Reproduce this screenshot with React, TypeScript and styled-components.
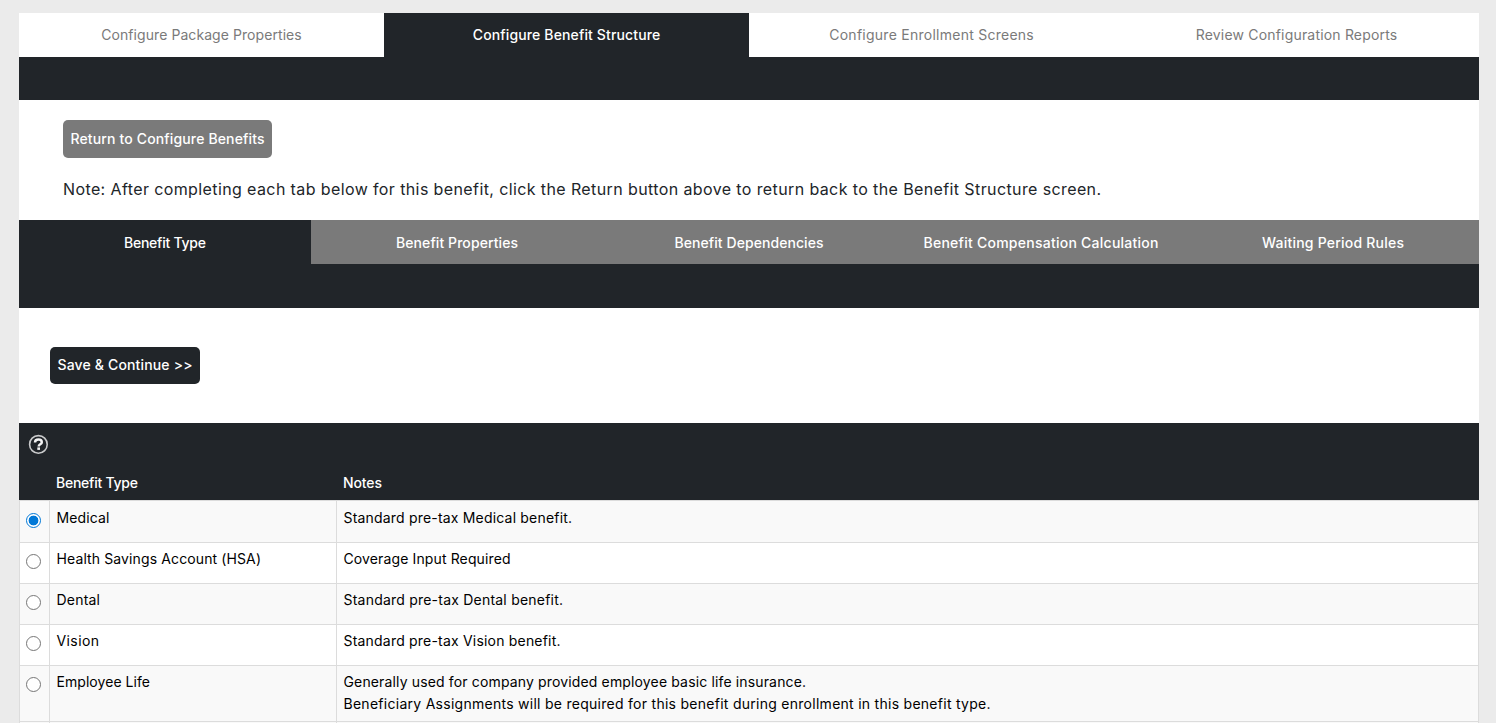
import React, { useState } from "react";
import styled, { createGlobalStyle } from "styled-components";

const ink = "#212529";
const gray = "#7a7a7a";
const rule = "#dcdcdc";

const GlobalStyle = createGlobalStyle`
  *, *::before, *::after { box-sizing: border-box; }
  html { background: #ebebeb; }
  body {
    margin: 0;
    height: 723px;
    overflow: hidden;
    font-family: Inter, "Liberation Sans", sans-serif;
    font-size: 14px;
    color: #000;
  }
`;

const Page = styled.main`
  margin: 13px 17px 0 19px;
  background: #fff;
`;

const Label = styled.span<{ $track: number }>`
  letter-spacing: ${(p) => p.$track}px;
  margin-right: ${(p) => -p.$track}px;
  white-space: nowrap;
`;

const TabBar = styled.nav`
  display: flex;
  height: 44px;
`;

const Tab = styled.button<{ $active: boolean; $filled?: boolean }>`
  flex: 1 1 0;
  display: flex;
  align-items: center;
  justify-content: center;
  padding: ${(p) => (p.$filled ? 2 : 0)}px 0 0;
  border: 0;
  font: inherit;
  line-height: 22px;
  font-weight: ${(p) => (p.$active || p.$filled ? 500 : 400)};
  color: ${(p) => (p.$active || p.$filled ? "#fff" : gray)};
  background: ${(p) => (p.$active ? ink : p.$filled ? gray : "#fff")};
`;

const Strip = styled.div<{ $height: number }>`
  height: ${(p) => p.$height}px;
  background: ${ink};
`;

const Intro = styled.section`
  height: 120px;
  padding: 20px 44px 0;
`;

const Button = styled.button<{ $tone: string; $width: number; $height: number }>`
  display: flex;
  align-items: flex-start;
  justify-content: center;
  width: ${(p) => p.$width}px;
  height: ${(p) => p.$height}px;
  padding: ${(p) => Math.floor((p.$height - 22) / 2)}px 0 0;
  border: 0;
  border-radius: 5px;
  font: inherit;
  line-height: 22px;
  font-weight: 500;
  color: #fff;
  background: ${(p) => p.$tone};
`;

const Note = styled.p`
  margin: 19px 0 0;
  font-size: 16px;
  line-height: 24px;
  color: ${ink};
`;

const Actions = styled.section`
  height: 115px;
  padding: 39px 31px 0;
`;

const TableHead = styled.header`
  height: 77px;
  color: #fff;
  background: ${ink};
  font-weight: 500;
`;

const HelpRow = styled.div`
  height: 49px;
  padding: 11px 0 0 9px;
`;

const HeadCells = styled.div`
  display: grid;
  grid-template-columns: 30px 287px 1fr;
  line-height: 22px;
`;

const HeadCell = styled.div`
  padding-left: 7px;
`;

const Row = styled.label<{ $height: number; $first: boolean }>`
  display: grid;
  grid-template-columns: 29px 287px 1fr;
  height: ${(p) => p.$height}px;
  line-height: 22px;
  border: solid ${rule};
  border-width: 1px 1px 0;
  background: #fff;
  &:nth-of-type(odd) { background: #f9f9f9; }
  & > * { padding-top: ${(p) => (p.$first ? 6 : 5)}px; }
`;

const Cell = styled.div`
  display: flex;
  flex-direction: column;
  align-items: flex-start;
  padding-left: 6.5px;
  border-left: 1px solid ${rule};
`;

const RadioCell = styled.div`
  padding-left: 6px;
`;

const Radio = styled.input.attrs({ type: "radio" })`
  appearance: none;
  display: block;
  width: 15px;
  height: 15px;
  margin: 6px 0 0;
  border: 1px solid #767676;
  border-radius: 50%;
  background: #fff;
  &:checked {
    border-color: #0078d7;
    background: radial-gradient(circle, #0078d7 4.6px, #fff 5.2px);
  }
`;

const topTabs = [
  { text: "Configure Package Properties", track: 0.07 },
  { text: "Configure Benefit Structure", track: 0.137 },
  { text: "Configure Enrollment Screens", track: 0.256 },
  { text: "Review Configuration Reports", track: 0.183 },
];

const benefitTabs = [
  { text: "Benefit Type", track: -0.24 },
  { text: "Benefit Properties", track: 0.082 },
  { text: "Benefit Dependencies", track: 0.066 },
  { text: "Benefit Compensation Calculation", track: 0.252 },
  { text: "Waiting Period Rules", track: 0.223 },
];

const benefits = [
  { name: "Medical", track: 0.14, height: 42, notes: [{ text: "Standard pre-tax Medical benefit.", track: 0.188 }] },
  { name: "Health Savings Account (HSA)", track: 0.114, height: 41, notes: [{ text: "Coverage Input Required", track: 0.123 }] },
  { name: "Dental", track: 0.212, height: 41, notes: [{ text: "Standard pre-tax Dental benefit.", track: 0.217 }] },
  { name: "Vision", track: 0.401, height: 41, notes: [{ text: "Standard pre-tax Vision benefit.", track: 0.199 }] },
  {
    name: "Employee Life",
    track: 0.053,
    height: 56,
    notes: [
      { text: "Generally used for company provided employee basic life insurance.", track: 0.145 },
      { text: "Beneficiary Assignments will be required for this benefit during enrollment in this benefit type.", track: 0.272 },
    ],
  },
];

const HelpIcon = () => (
  <svg width="20" height="20" viewBox="0 0 20 20" fill="none" role="img" aria-label="Help">
    <circle cx="10.4" cy="10.4" r="8.8" stroke="#c9cacb" strokeWidth="1.6" />
    <path d="M7 8.5C7 6.3 8.4 5.5 10.4 5.5s3.4.9 3.4 2.7c0 2.1-3.1 2-3.1 4.2" stroke="#f4f4f4" strokeWidth="2.5" />
    <rect x="9.3" y="13.4" width="2.7" height="2.5" fill="#f4f4f4" />
  </svg>
);

export default function App() {
  const [selected, setSelected] = useState("Medical");
  return (
    <>
      <GlobalStyle />
      <Page>
        <TabBar>
          {topTabs.map((t, i) => (
            <Tab key={t.text} $active={i === 1}>
              <Label $track={t.track}>{t.text}</Label>
            </Tab>
          ))}
        </TabBar>
        <Strip $height={43} />
        <Intro>
          <Button $tone={gray} $width={209} $height={38}>
            <Label $track={0.141}>Return to Configure Benefits</Label>
          </Button>
          <Note>
            <Label $track={0.39}>
              Note: After completing each tab below for this benefit, click the Return button above to return back to the Benefit Structure screen.
            </Label>
          </Note>
        </Intro>
        <TabBar>
          {benefitTabs.map((t, i) => (
            <Tab key={t.text} $active={i === 0} $filled>
              <Label $track={t.track}>{t.text}</Label>
            </Tab>
          ))}
        </TabBar>
        <Strip $height={44} />
        <Actions>
          <Button $tone={ink} $width={150} $height={37}>
            <Label $track={0.158}>Save &amp; Continue &gt;&gt;</Label>
          </Button>
        </Actions>
        <TableHead>
          <HelpRow>
            <HelpIcon />
          </HelpRow>
          <HeadCells>
            <HeadCell />
            <HeadCell><Label $track={-0.24}>Benefit Type</Label></HeadCell>
            <HeadCell><Label $track={-0.109}>Notes</Label></HeadCell>
          </HeadCells>
        </TableHead>
        {benefits.map((b, i) => (
          <Row key={b.name} $height={b.height} $first={i === 0}>
            <RadioCell>
              <Radio name="benefit" checked={selected === b.name} onChange={() => setSelected(b.name)} />
            </RadioCell>
            <Cell><Label $track={b.track}>{b.name}</Label></Cell>
            <Cell>
              {b.notes.map((n) => (
                <Label key={n.text} $track={n.track}>{n.text}</Label>
              ))}
            </Cell>
          </Row>
        ))}
        <Row as="div" $height={20} $first={false}>
          <RadioCell />
          <Cell />
          <Cell />
        </Row>
      </Page>
    </>
  );
}
